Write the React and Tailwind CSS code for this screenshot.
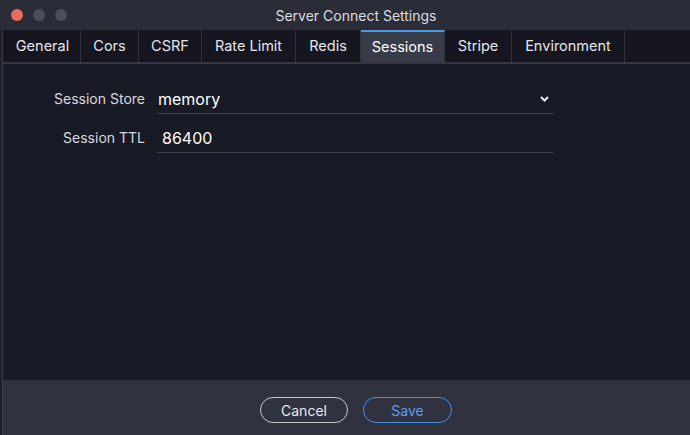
import React from 'react';

const tabs = [
  { name: 'General', w: 'w-[76px]' },
  { name: 'Cors', w: 'w-[58px]' },
  { name: 'CSRF', w: 'w-[63px]' },
  { name: 'Rate Limit', w: 'w-[94px]' },
  { name: 'Redis', w: 'w-[65px]' },
  { name: 'Sessions', w: 'w-[84px]', active: true },
  { name: 'Stripe', w: 'w-[67px]' },
  { name: 'Environment', w: 'w-[113px]' },
];

const App = () => {
  return (
    <div className="w-[690px] h-[435px] bg-[#1e1f29] flex flex-col overflow-hidden" style={{ fontFamily: 'Inter, "Open Sans", sans-serif' }}>
      {/* title bar */}
      <div className="h-[30px] bg-[#2a2c37] flex items-center relative shrink-0">
        <div className="flex items-center gap-[10px] pl-[11px]">
          <span className="w-[12px] h-[12px] rounded-full bg-[#ec6a5e]"></span>
          <span className="w-[12px] h-[12px] rounded-full bg-[#4b4d57]"></span>
          <span className="w-[12px] h-[12px] rounded-full bg-[#4b4d57]"></span>
        </div>
        <div className="absolute inset-0 flex items-center justify-center pl-[22px] text-[14px] text-[#dcdde2]">Server Connect Settings</div>
      </div>

      <div className="flex-1 flex flex-col border-l border-[#3b3d49] ml-[2px]">
        {/* tabs */}
        <div className="h-[34px] bg-[#151620] flex border-b-2 border-[#343643] shrink-0 pl-[2px]">
          {tabs.map((t) => (
            <div
              key={t.name}
              className={`${t.w} flex items-center justify-center text-[14.5px] border-r border-[#2f313d] ${
                t.active ? 'bg-[#383b48] border-t-2 border-t-[#4b9be3] text-white' : 'text-[#e4e5ea]'
              }`}
            >
              {t.name}
            </div>
          ))}
        </div>

        {/* form */}
        <div className="flex-1 bg-[#181a25] pt-[22px]">
          <div className="flex items-end h-[28px]">
            <label className="w-[142px] text-right text-[14px] text-[#d8d9de] pb-[5px]">Session Store</label>
            <div className="ml-[12px] w-[397px] h-[28px] border-b border-[#3e404c] flex items-center justify-between pl-[1px] pr-[4px]">
              <span className="text-[16px] text-white pb-[2px]">memory</span>
              <svg width="11" height="8" viewBox="0 0 11 8" className="mb-[1px]">
                <path d="M2 2 L5.5 5.5 L9 2" stroke="#f0f0f0" strokeWidth="2" fill="none" />
              </svg>
            </div>
          </div>
          <div className="flex items-end h-[28px] mt-[11px]">
            <label className="w-[142px] text-right text-[14px] text-[#d8d9de] pb-[5px]">Session TTL</label>
            <div className="ml-[12px] w-[397px] h-[28px] border-b border-[#3e404c] flex items-center pl-[5px]">
              <span className="text-[16px] text-white pb-[2px]">86400</span>
            </div>
          </div>
        </div>

        {/* footer */}
        <div className="h-[55px] bg-[#303240] flex items-start justify-center gap-[15px] pt-[17px] pl-[19px] shrink-0">
          <button className="w-[88px] h-[26px] rounded-full border border-[#c4c5cb] text-[14px] text-[#e8e9ee]">Cancel</button>
          <button className="w-[89px] h-[26px] rounded-full border border-[#4a8fe0] text-[14px] text-[#5aa0ee]">Save</button>
        </div>
      </div>
    </div>
  );
};

export default App;
